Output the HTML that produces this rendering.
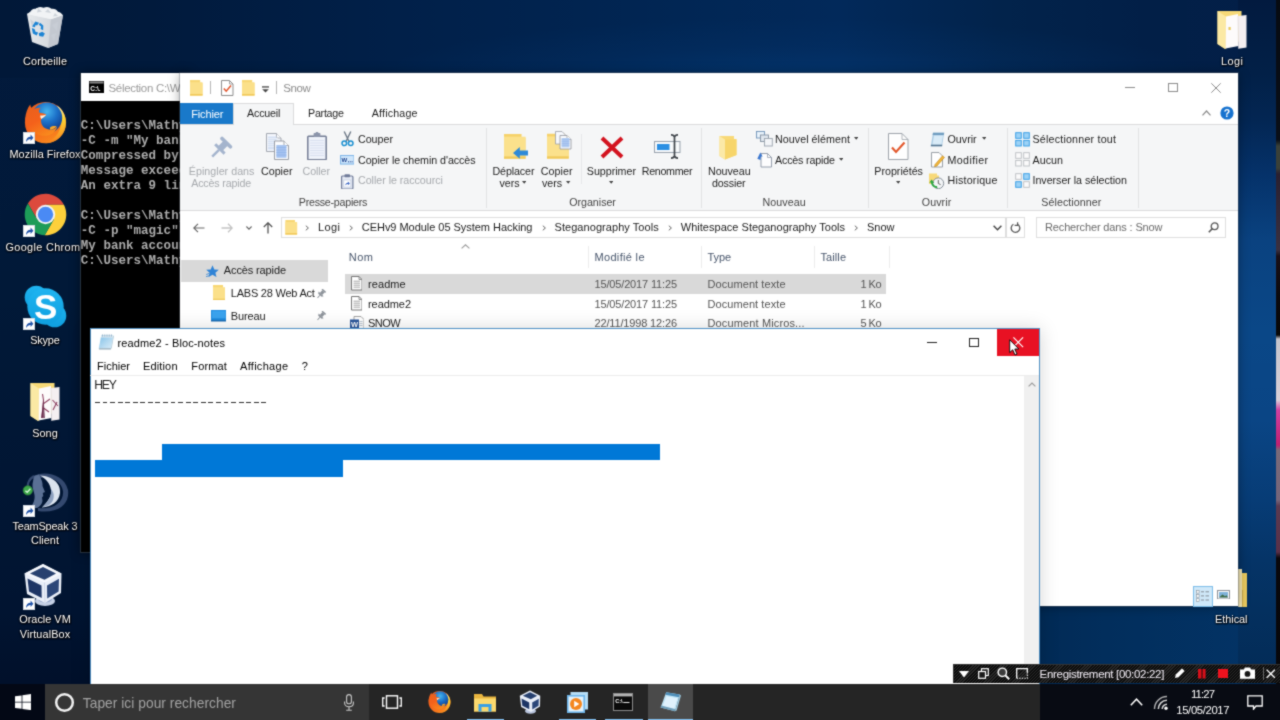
<!DOCTYPE html>
<html><head><meta charset="utf-8"><title>desktop</title><style>
html,body{margin:0;padding:0;background:#011839;}
body{width:1280px;height:720px;overflow:hidden;position:relative;font-family:"Liberation Sans",sans-serif;}
#scr{position:absolute;left:0;top:0;width:1280px;height:720px;overflow:hidden;filter:url(#soft);}
.b{position:absolute;display:block;}
.t{position:absolute;white-space:nowrap;font-family:"Liberation Sans",sans-serif;}
#wall{background:
 linear-gradient(180deg,#021a3f 0,#022047 73px,#032653 120px,#05326a 175px,#0a4280 240px,#0a4787 330px,#0a4585 420px,#073c76 500px,#053467 560px,#04305f 610px,#032c58 664px,#032c58 720px) 1238px 0/42px 720px no-repeat,
 linear-gradient(90deg,#022a55 0,#022e5c 30%,#033467 100%) 1030px 600px/250px 120px no-repeat,
 radial-gradient(ellipse 420px 62px at 790px 80px,rgba(5,62,124,.55) 0,rgba(4,52,108,.28) 55%,rgba(3,44,96,0) 100%) 0 0/1280px 78px no-repeat,
 linear-gradient(90deg,#011838 0,#011a3c 150px,#012049 400px,#012654 680px,#02295a 840px,#02234b 1000px,#021f47 1150px,#031f48 1280px) 0 0/1280px 78px no-repeat,
 linear-gradient(180deg,#021a3d 0,#011938 40%,#011431 85%,#010e27 100%);}
</style></head>
<body>
<svg width="0" height="0" style="position:absolute"><defs><filter id="soft" x="0" y="0" width="100%" height="100%" color-interpolation-filters="sRGB"><feConvolveMatrix order="3" kernelMatrix="0.035 0.095 0.035 0.095 0.48 0.095 0.035 0.095 0.035" edgeMode="duplicate" preserveAlpha="true"/></filter></defs></svg>
<div id="scr">
<!-- gen1_desktop -->
<div class="b" id="wall" style="left:0;top:0;width:1280px;height:720px;"></div>
<div class="b" style="left:1276.3px;top:0px;width:3.7px;height:720px;background:linear-gradient(180deg,#070b12 0,#0a0f18 140px,#3a4038 146px,#3a4038 168px,#2a2030 174px,#3a3040 250px,#1a1018 256px,#0c0a0e 297px,#080808 335px,#c4c4cc 339px,#d8d0d8 400px,#d040a0 410px,#c02070 445px,#7a6a78 450px,#75657a 500px,#5a3a50 506px,#5a3048 552px,#0a080c 558px,#06070a 720px);"></div>
<svg class="b" style="left:24px;top:5px;" width="42" height="46" viewBox="0 0 42 46">
  <defs>
   <linearGradient id="bin1" x1="0" y1="0" x2="1" y2="0"><stop offset="0" stop-color="#e6e9ec"/><stop offset=".6" stop-color="#d6dadf"/><stop offset="1" stop-color="#bcc2ca"/></linearGradient>
  </defs>
  <path d="M3 9 L13 3 L39 10 L34 39 L24 43 L8 37 Z" fill="url(#bin1)"/>
  <path d="M27 14 L39 10 L34 39 L24 43 Z" fill="#c3c8d0"/>
  <path d="M3 9 L13 3 L39 10 L27 14 Z" fill="#e9ecef"/>
  <path d="M6 7.5 q2 -4.5 6 -3.5 q3 -3.5 7.5 -1.2 q4.5 -2.2 8 1 q4.5 -.5 6.5 3 q3.5 .5 4.5 3.5 l-11.5 4 l-23 -5z" fill="#f1f3f5"/>
  <g fill="#c9cfd7" opacity=".85"><path d="M14 3.5 l4 3 l-5 1z"/><path d="M24 4 l3 4 l-6 -1z"/><path d="M31 8 l3 3 l-5 .5z"/><path d="M28 20 l6 -3 l-1 9z"/><path d="M27 30 l5 -2 l-2 8z"/><path d="M6 14 l4 3 l-2 5z"/></g>
  <g fill="#1c84d4" transform="translate(14.3 24.2) scale(.78) translate(-16 -25)">
    <path d="M8 21.5 L12.2 15.2 L17 16.6 L14.4 20.2 L12.6 19.6 L11.6 22.6Z"/>
    <path d="M18.2 16.8 L22.4 20.4 L22.2 26.2 L19 24.6 L19.6 21.6 L16.6 19.2Z"/>
    <path d="M7.6 23.6 L11.2 24.6 L12.4 28.4 L15.8 29.2 L14 33 L9 30.4Z"/>
    <path d="M16.6 30.2 L21 28.2 L24.4 30.4 L22.2 34.6 L17.2 33.6Z"/>
  </g>
</svg>
<span class="t" style="left:23.00px;top:51.90px;font-size:10.9px;line-height:18px;height:18px;color:#fff;letter-spacing:0.123px;text-shadow:0 1px 2px #000,0 0 2px #000,1px 1px 1px rgba(0,0,0,.8);">Corbeille</span>
<svg class="b" style="left:24px;top:99.5px;" width="43" height="44" viewBox="0 0 43 44">
  <defs>
   <radialGradient id="ffg" cx=".5" cy=".3" r=".75"><stop offset="0" stop-color="#46b6ef"/><stop offset=".45" stop-color="#1c70c8"/><stop offset="1" stop-color="#0d2f7c"/></radialGradient>
   <linearGradient id="fff" x1=".1" y1="0" x2=".7" y2="1"><stop offset="0" stop-color="#e8601d"/><stop offset=".5" stop-color="#f4611b"/><stop offset="1" stop-color="#f98b1d"/></linearGradient>
   <linearGradient id="ffy" x1="0" y1="0" x2="0" y2="1"><stop offset="0" stop-color="#fff3b0"/><stop offset=".35" stop-color="#fdd534"/><stop offset="1" stop-color="#f7821c"/></linearGradient>
  </defs>
  <!-- fox body disk -->
  <circle cx="21.5" cy="22.6" r="20.6" fill="url(#fff)"/>
  <!-- yellow tail on right -->
  <path d="M33 5.5 C41.5 11 44.5 23 39.5 32.5 C35.5 39.5 28.5 43 21.5 43.2 C31 40 37.5 31.5 36.8 21 C36.5 15 35 9.5 33 5.5Z" fill="url(#ffy)"/>
  <!-- globe -->
  <circle cx="22.8" cy="17.8" r="15.4" fill="url(#ffg)"/>
  <!-- fox head overlapping globe -->
  <path d="M1.2 19 C1.6 13 3.4 8.5 6.2 4.6 C6.6 7.2 7.6 9 9.2 10 C11 8.2 13.8 7.4 16.8 7.8 C15.2 9.2 14.6 10.8 15.1 12.6 C17.2 13.4 19.8 13.4 22.3 14.4 C21.4 16.4 18.8 17.4 17.3 18.9 C16.4 22.3 18 26.2 21.8 28.6 C25.8 30.8 30.5 29.8 33.4 26.2 C31.4 33.5 24 37 17 35.5 C8 33.5 1.5 27 1.2 19Z" fill="url(#fff)"/>
  <path d="M17.3 18.9 C18.8 17.4 21.4 16.4 22.3 14.4 C20.5 15 18.5 15.6 16.2 15.4 C16.2 16.8 16.6 18 17.3 18.9Z" fill="#fff6e6"/>
  <path d="M26 27.5 C28 26 30 25.7 32.5 26.2 C31 28.4 28.6 29.8 26 29.8Z" fill="#f9a62a"/>
</svg>
<svg class="b" style="left:22.5px;top:131.5px;" width="12" height="12" viewBox="0 0 12 12"><rect width="12" height="12" fill="#fff"/><rect x=".5" y=".5" width="11" height="11" fill="none" stroke="#d5dbe3"/><path d="M3 10 C3 6.5 5 4.8 7.6 4.8 L7.6 2.6 L10.4 5.8 L7.6 9 L7.6 6.9 C5.6 6.9 4.4 7.8 3 10Z" fill="#1f52a8"/></svg>
<span class="t" style="left:9.50px;top:145.40px;font-size:10.9px;line-height:18px;height:18px;color:#fff;letter-spacing:0.053px;text-shadow:0 1px 2px #000,0 0 2px #000,1px 1px 1px rgba(0,0,0,.8);">Mozilla Firefox</span>
<svg class="b" style="left:24px;top:193px;" width="43" height="43" viewBox="0 0 43 43"><path d="M3.90 10.42 A20.8 20.8 0 0 1 39.90 11.80 L21.50 11.80 L13.10 26.35Z" fill="#dc4a3d"/><path d="M39.90 11.80 A20.8 20.8 0 0 1 20.70 42.28 L29.90 26.35 L21.50 11.80Z" fill="#fdd03b"/><path d="M20.70 42.28 A20.8 20.8 0 0 1 3.90 10.42 L13.10 26.35 L29.90 26.35Z" fill="#1d9c58"/>
      <circle cx="21.5" cy="21.5" r="9.7" fill="#f2f2f2"/><circle cx="21.5" cy="21.5" r="7.7" fill="#4a8af4"/></svg>
<svg class="b" style="left:22.5px;top:225px;" width="12" height="12" viewBox="0 0 12 12"><rect width="12" height="12" fill="#fff"/><rect x=".5" y=".5" width="11" height="11" fill="none" stroke="#d5dbe3"/><path d="M3 10 C3 6.5 5 4.8 7.6 4.8 L7.6 2.6 L10.4 5.8 L7.6 9 L7.6 6.9 C5.6 6.9 4.4 7.8 3 10Z" fill="#1f52a8"/></svg>
<div class="b" style="left:0;top:236px;width:80.5px;height:22px;overflow:hidden"><span class="t" style="left:5.50px;top:1.90px;font-size:10.9px;line-height:18px;height:18px;color:#fff;letter-spacing:0.338px;text-shadow:0 1px 2px #000,0 0 2px #000,1px 1px 1px rgba(0,0,0,.8);">Google Chrome</span></div>
<svg class="b" style="left:24px;top:285px;" width="43" height="43" viewBox="0 0 43 43">
      <defs><linearGradient id="skg" x1="0" y1="0" x2="0" y2="1"><stop offset="0" stop-color="#1fb4f0"/><stop offset="1" stop-color="#0f9fe0"/></linearGradient></defs>
      <circle cx="12.3" cy="12.3" r="11.6" fill="url(#skg)"/><circle cx="30.7" cy="30.7" r="11.6" fill="url(#skg)"/><circle cx="21.5" cy="21.5" r="18.2" fill="url(#skg)"/>
      <text x="21.7" y="34" font-family="Liberation Sans" font-weight="bold" font-size="35" text-anchor="middle" fill="#fff">S</text>
    </svg>
<svg class="b" style="left:22.5px;top:317.5px;" width="12" height="12" viewBox="0 0 12 12"><rect width="12" height="12" fill="#fff"/><rect x=".5" y=".5" width="11" height="11" fill="none" stroke="#d5dbe3"/><path d="M3 10 C3 6.5 5 4.8 7.6 4.8 L7.6 2.6 L10.4 5.8 L7.6 9 L7.6 6.9 C5.6 6.9 4.4 7.8 3 10Z" fill="#1f52a8"/></svg>
<span class="t" style="left:30.25px;top:330.90px;font-size:10.9px;line-height:18px;height:18px;color:#fff;letter-spacing:-0.199px;text-shadow:0 1px 2px #000,0 0 2px #000,1px 1px 1px rgba(0,0,0,.8);">Skype</span>
<svg class="b" style="left:30px;top:382px;" width="30" height="40" viewBox="0 0 30 40">
          <path d="M0.5 1 L24.5 1 L24.5 30 L8 39 L0.5 34Z" fill="#f6d977"/>
          <path d="M0.5 1 L9 6.5 L8.3 39 L0.5 34Z" fill="#fbe9a4"/>
          <path d="M9 6.5 L21 4 L21.5 36 L8.5 38.5Z" fill="#fdfbfb"/>
          <path d="M21 6 L29.5 5 L29.5 37.5 L21.5 38.7Z" fill="#f4eff1"/>
          <path d="M21 6 L21.5 38.7" stroke="#d9d3d6" stroke-width=".6"/><g stroke="#7b2248" stroke-width="1.1" fill="none" opacity=".85"><path d="M12 36 L13.5 18 L12.5 12"/><path d="M13 22 L20 17 M13.5 26 L19 30 M22.5 18 L28 24 M23 28 L27 20"/></g><path d="M11 36 L13.5 17 L15 36Z" fill="#5a1c3d" opacity=".75"/></svg>
<span class="t" style="left:32.25px;top:424.40px;font-size:10.9px;line-height:18px;height:18px;color:#fff;letter-spacing:0.014px;text-shadow:0 1px 2px #000,0 0 2px #000,1px 1px 1px rgba(0,0,0,.8);">Song</span>
<svg class="b" style="left:22px;top:471px;" width="47" height="46" viewBox="0 0 47 46">
      <path d="M10 6 C20 -1 42 2 46 19 C48 33 36 43 16 40 L16 37 C32 39 42 31 41 20 C39 8 24 3 13 9Z" fill="#34496f"/>
      <path d="M18 4.5 C31 5 39 13 38 22 C37 31 29 36 20 36.5 C25 31 30 26 29 19 C28 12 24 8 18 4.5Z" fill="#dbe3ee"/>
      <path d="M20 36.5 C27 30 30 24 29 18 C33 22 33 30 27 34Z" fill="#8da0bf"/>
      <path d="M12 5 L17 3.5 C19 8 21 11 20.5 15 L23 21 L20.8 22 L21.3 25 L20 26.5 L20.5 30 C20 33 18 35.5 15 37 L8 37 C12 32 13 28 12.5 24 C12 20 10 17 10.5 13Z" fill="#5a7094"/>
      <path d="M12 5 C7.5 8 5.5 12 5.6 16" stroke="#34496f" stroke-width="2.2" fill="none"/>
      <circle cx="5.8" cy="19.4" r="4.7" fill="#3da84a"/><circle cx="5.8" cy="19.4" r="4.7" fill="none" stroke="#2b7d35" stroke-width=".7"/>
      <path d="M3.4 19.7 L5.2 21.3 L8.4 17.7" stroke="#d7f4d9" stroke-width="1.3" fill="none"/>
    </svg>
<svg class="b" style="left:22.5px;top:505px;" width="12" height="12" viewBox="0 0 12 12"><rect width="12" height="12" fill="#fff"/><rect x=".5" y=".5" width="11" height="11" fill="none" stroke="#d5dbe3"/><path d="M3 10 C3 6.5 5 4.8 7.6 4.8 L7.6 2.6 L10.4 5.8 L7.6 9 L7.6 6.9 C5.6 6.9 4.4 7.8 3 10Z" fill="#1f52a8"/></svg>
<span class="t" style="left:12.50px;top:516.90px;font-size:10.9px;line-height:18px;height:18px;color:#fff;letter-spacing:-0.165px;text-shadow:0 1px 2px #000,0 0 2px #000,1px 1px 1px rgba(0,0,0,.8);">TeamSpeak 3</span>
<span class="t" style="left:31.00px;top:530.90px;font-size:10.9px;line-height:18px;height:18px;color:#fff;letter-spacing:0.026px;text-shadow:0 1px 2px #000,0 0 2px #000,1px 1px 1px rgba(0,0,0,.8);">Client</span>
<svg class="b" style="left:23px;top:563px;" width="40" height="46" viewBox="0 0 40 46">
      <ellipse cx="22" cy="38" rx="10" ry="5" fill="#c4cfe4"/>
      <ellipse cx="22" cy="36" rx="7" ry="3.4" fill="#8fa2c8"/>
      <path d="M1.5 10.5 L20 1 L38.5 10.5 L38 30 L22 40 L4 31Z" fill="#e9eef8"/>
      <path d="M1.5 10.5 L20 1 L38.5 10.5 L21.5 19.5Z" fill="#f6f8fd"/>
      <path d="M7 10.5 L20 4 L33 10.5 L21.5 16.8Z" fill="#27406f"/>
      <path d="M4.5 15.5 L18.5 22.5 L18.7 35 L6 28.5Z" fill="#1d3565"/>
      <path d="M24 22.5 L36 15.8 L35.6 28.5 L24.2 35.5Z" fill="#2b4678"/>
      <path d="M21.5 19.5 L22 40" stroke="#cfd7e8" stroke-width="1"/>
    </svg>
<svg class="b" style="left:22.5px;top:597.5px;" width="12" height="12" viewBox="0 0 12 12"><rect width="12" height="12" fill="#fff"/><rect x=".5" y=".5" width="11" height="11" fill="none" stroke="#d5dbe3"/><path d="M3 10 C3 6.5 5 4.8 7.6 4.8 L7.6 2.6 L10.4 5.8 L7.6 9 L7.6 6.9 C5.6 6.9 4.4 7.8 3 10Z" fill="#1f52a8"/></svg>
<span class="t" style="left:19.25px;top:610.40px;font-size:10.9px;line-height:18px;height:18px;color:#fff;letter-spacing:0.002px;text-shadow:0 1px 2px #000,0 0 2px #000,1px 1px 1px rgba(0,0,0,.8);">Oracle VM</span>
<span class="t" style="left:19.75px;top:624.60px;font-size:10.9px;line-height:18px;height:18px;color:#fff;letter-spacing:0.113px;text-shadow:0 1px 2px #000,0 0 2px #000,1px 1px 1px rgba(0,0,0,.8);">VirtualBox</span>
<svg class="b" style="left:1217px;top:9.5px;" width="30" height="40" viewBox="0 0 30 40">
          <path d="M0.5 1 L24.5 1 L24.5 30 L8 39 L0.5 34Z" fill="#f6d977"/>
          <path d="M0.5 1 L9 6.5 L8.3 39 L0.5 34Z" fill="#fbe9a4"/>
          <path d="M9 6.5 L21 4 L21.5 36 L8.5 38.5Z" fill="#fdfbfb"/>
          <path d="M21 6 L29.5 5 L29.5 37.5 L21.5 38.7Z" fill="#f4eff1"/>
          <path d="M21 6 L21.5 38.7" stroke="#d9d3d6" stroke-width=".6"/><rect x="11.5" y="17" width="2.2" height="3" fill="#e8c95a"/></svg>
<span class="t" style="left:1221.00px;top:51.90px;font-size:10.9px;line-height:18px;height:18px;color:#fff;letter-spacing:0.464px;text-shadow:0 1px 2px #000,0 0 2px #000,1px 1px 1px rgba(0,0,0,.8);">Logi</span>
<div class="b" style="left:1238px;top:569px;width:4.2px;height:38px;background:#f3e6b4;"></div>
<div class="b" style="left:1242px;top:573px;width:5px;height:34px;background:#e9c95e;"></div>
<div class="b" style="left:1241.6px;top:590px;width:1px;height:17px;background:#c9a94a;"></div>
<span class="t" style="left:1215.05px;top:610.20px;font-size:10.9px;line-height:18px;height:18px;color:#fff;letter-spacing:-0.036px;text-shadow:0 1px 2px #000,0 0 2px #000,1px 1px 1px rgba(0,0,0,.8);">Ethical</span>
<!-- gen2_cmd -->
<div class="b" style="left:80.3px;top:72.8px;width:110px;height:480.6px;background:#000;box-shadow:0 0 10px rgba(0,0,0,.45);border:1px solid #27323f;box-sizing:border-box;"></div>
<div class="b" style="left:80.5px;top:72.8px;width:110px;height:28.5px;background:#fff;"></div>
<svg class="b" style="left:88.5px;top:80.5px;" width="15" height="12" viewBox="0 0 15 12"><rect width="15" height="12" fill="#000"/><rect x=".5" y=".5" width="14" height="2" fill="#8a8a8a"/><text x="1.2" y="9.6" font-family="Liberation Sans" font-weight="bold" font-size="6.5" fill="#fff">C:\.</text></svg>
<div class="b" style="left:100px;top:76px;width:80px;height:24px;overflow:hidden"><span class="t" style="left:8.50px;top:2.62px;font-size:11.5px;line-height:18px;height:18px;color:#9a9a9a;letter-spacing:-0.312px;">Sélection C:\W</span></div>
<div class="b" style="left:80.5px;top:101px;width:100px;height:200px;overflow:hidden">
<span class="t" style="left:0.30px;top:14.97px;font-size:12.55px;line-height:20px;height:20px;color:#adadad;font-family:'Liberation Mono',monospace;font-weight:bold;transform:scaleY(1.08);transform-origin:0 13px;white-space:pre;">C:\Users\Mathy</span>
<span class="t" style="left:0.30px;top:29.97px;font-size:12.55px;line-height:20px;height:20px;color:#adadad;font-family:'Liberation Mono',monospace;font-weight:bold;transform:scaleY(1.08);transform-origin:0 13px;white-space:pre;">-C -m "My bank</span>
<span class="t" style="left:0.30px;top:44.97px;font-size:12.55px;line-height:20px;height:20px;color:#adadad;font-family:'Liberation Mono',monospace;font-weight:bold;transform:scaleY(1.08);transform-origin:0 13px;white-space:pre;">Compressed by </span>
<span class="t" style="left:0.30px;top:59.97px;font-size:12.55px;line-height:20px;height:20px;color:#adadad;font-family:'Liberation Mono',monospace;font-weight:bold;transform:scaleY(1.08);transform-origin:0 13px;white-space:pre;">Message exceed</span>
<span class="t" style="left:0.30px;top:74.97px;font-size:12.55px;line-height:20px;height:20px;color:#adadad;font-family:'Liberation Mono',monospace;font-weight:bold;transform:scaleY(1.08);transform-origin:0 13px;white-space:pre;">An extra 9 lin</span>
<span class="t" style="left:0.30px;top:104.97px;font-size:12.55px;line-height:20px;height:20px;color:#adadad;font-family:'Liberation Mono',monospace;font-weight:bold;transform:scaleY(1.08);transform-origin:0 13px;white-space:pre;">C:\Users\Mathy</span>
<span class="t" style="left:0.30px;top:119.97px;font-size:12.55px;line-height:20px;height:20px;color:#adadad;font-family:'Liberation Mono',monospace;font-weight:bold;transform:scaleY(1.08);transform-origin:0 13px;white-space:pre;">-C -p "magic" </span>
<span class="t" style="left:0.30px;top:134.97px;font-size:12.55px;line-height:20px;height:20px;color:#adadad;font-family:'Liberation Mono',monospace;font-weight:bold;transform:scaleY(1.08);transform-origin:0 13px;white-space:pre;">My bank accoun</span>
<span class="t" style="left:0.30px;top:149.97px;font-size:12.55px;line-height:20px;height:20px;color:#adadad;font-family:'Liberation Mono',monospace;font-weight:bold;transform:scaleY(1.08);transform-origin:0 13px;white-space:pre;">C:\Users\Mathy</span>
</div>
<!-- gen3_explorer -->
<div class="b" style="left:180px;top:73.4px;width:1058px;height:533.1px;background:#fff;box-shadow:0 1px 11px rgba(0,0,0,.36);outline:1px solid rgba(80,90,100,.35);"></div>
<svg class="b" style="left:190px;top:80px;" width="12.5" height="15.5" viewBox="0 0 12.5 15.5"><path d="M0 0 H10.2 V3 H12.5 V15.5 H0Z" fill="#f8d775"/><path d="M0 2.2 H12.5 V15.5 H0Z" fill="#fbe08a"/><path d="M0 14 H12.5 V15.5 H0Z" fill="#f1c95a"/></svg>
<div class="b" style="left:209.7px;top:81px;width:1px;height:13px;background:#b5b5b5;"></div>
<svg class="b" style="left:221px;top:80px;" width="12.5" height="16" viewBox="0 0 12.5 16"><path d="M.5 .5 H8.5 L12 4 V15.5 H.5Z" fill="#fff" stroke="#8d8d8d" stroke-width="1"/><path d="M8.5 .5 V4 H12" fill="none" stroke="#8d8d8d" stroke-width=".8"/><path d="M2.8 8.6 L5.2 11.2 L10 5.6" fill="none" stroke="#e0532b" stroke-width="1.5"/></svg>
<svg class="b" style="left:242px;top:80px;" width="12.5" height="15.5" viewBox="0 0 12.5 15.5"><path d="M0 0 H10.2 V3 H12.5 V15.5 H0Z" fill="#f8d775"/><path d="M0 2.2 H12.5 V15.5 H0Z" fill="#fbe08a"/><path d="M0 14 H12.5 V15.5 H0Z" fill="#f1c95a"/></svg>
<svg class="b" style="left:261.5px;top:85.5px;" width="7" height="7" viewBox="0 0 7 7"><rect x="0" y=".3" width="7" height="1.3" fill="#444"/><path d="M.2 3.2 H6.8 L3.5 6.6Z" fill="#444"/></svg>
<div class="b" style="left:276px;top:81px;width:1px;height:13px;background:#b5b5b5;"></div>
<span class="t" style="left:283.20px;top:79.12px;font-size:11.5px;line-height:18px;height:18px;color:#8b8b8b;letter-spacing:-0.423px;">Snow</span>
<div class="b" style="left:1125px;top:87.2px;width:10px;height:1px;background:#8c8c8c;"></div>
<div class="b" style="left:1168px;top:82.5px;width:9.5px;height:9.5px;border:1px solid #8c8c8c;box-sizing:border-box;"></div>
<svg class="b" style="left:1211px;top:82.5px;" width="10" height="10" viewBox="0 0 10 10"><path d="M.3 .3 L9.7 9.7 M9.7 .3 L.3 9.7" stroke="#8c8c8c" stroke-width="1"/></svg>
<div class="b" style="left:180px;top:102.5px;width:53.3px;height:21.5px;background:#1979ca;"></div>
<span class="t" style="left:191.30px;top:104.54px;font-size:11px;line-height:18px;height:18px;color:#fff;letter-spacing:-0.168px;">Fichier</span>
<div class="b" style="left:180px;top:123.8px;width:1058px;height:87.5px;background:#f5f6f7;border-top:1px solid #dadbdc;border-bottom:1px solid #dadbdc;box-sizing:border-box;"></div>
<div class="b" style="left:233.3px;top:102.5px;width:60.5px;height:22.3px;background:#f5f6f7;border:1px solid #dadbdc;border-bottom:none;box-sizing:border-box;"></div>
<span class="t" style="left:247.00px;top:104.43px;font-size:10.7px;line-height:18px;height:18px;color:#1e1e1e;letter-spacing:-0.166px;">Accueil</span>
<span class="t" style="left:308.00px;top:104.43px;font-size:10.7px;line-height:18px;height:18px;color:#1e1e1e;letter-spacing:-0.246px;">Partage</span>
<span class="t" style="left:371.80px;top:104.43px;font-size:10.7px;line-height:18px;height:18px;color:#1e1e1e;letter-spacing:0.160px;">Affichage</span>
<svg class="b" style="left:1201.5px;top:110px;" width="9" height="6" viewBox="0 0 9 6"><path d="M.5 5.3 L4.5 1 L8.5 5.3" fill="none" stroke="#8a8a8a" stroke-width="1.2"/></svg>
<svg class="b" style="left:1220px;top:106px;" width="14" height="14" viewBox="0 0 14 14"><circle cx="7" cy="7" r="6.6" fill="#1672cf"/><text x="7" y="11" font-family="Liberation Sans" font-weight="bold" font-size="10.5" text-anchor="middle" fill="#fff">?</text></svg>
<svg class="b" style="left:211px;top:136px;" width="22" height="22" viewBox="0 0 22 22"><g stroke="#a4b4cd" stroke-linecap="butt" fill="none"><path d="M1.2 20.6 L8 13.8" stroke-width="2.5"/><path d="M4.2 8.2 L13.6 17.6" stroke-width="3"/><path d="M8.6 13.2 L14.4 7.4" stroke-width="6.4"/><path d="M11 2.4 L19.4 10.8" stroke-width="3.6" stroke-linecap="round"/></g></svg>
<span class="t" style="left:188.80px;top:161.83px;font-size:10.7px;line-height:18px;height:18px;color:#a6a9ad;letter-spacing:0.022px;">Épingler dans</span>
<span class="t" style="left:191.20px;top:173.83px;font-size:10.7px;line-height:18px;height:18px;color:#a6a9ad;letter-spacing:-0.169px;">Accès rapide</span>
<svg class="b" style="left:266px;top:133px;" width="23" height="27" viewBox="0 0 23 27"><path d="M.5 .5 H10.5 L15 5 V18.5 H.5Z" fill="#f3f6fc" stroke="#9b9fa8" stroke-width=".9"/><path d="M10.5 .5 V5 H15" fill="#fff" stroke="#9b9fa8" stroke-width=".8"/>
      <rect x="2" y="3.5" width="8.5" height="13" fill="#d5e0f3"/><g stroke="#f3f6fc" stroke-width=".6"><path d="M2 5.5H12M2 7.5H12M2 9.5H12M2 11.5H12M2 13.5H12"/></g>
      <path d="M8.5 8 H18 L22.5 12.5 V26.5 H8.5Z" fill="#fbfcfe" stroke="#90949d" stroke-width=".9"/><path d="M18 8 V12.5 H22.5" fill="#fff" stroke="#90949d" stroke-width=".8"/>
      <rect x="10.3" y="12" width="10.2" height="12.8" fill="#a7c4f0"/><g stroke="#8db0e8" stroke-width=".7"><path d="M10.3 14.5H20.5M10.3 17H20.5M10.3 19.5H20.5M10.3 22H20.5"/></g></svg>
<span class="t" style="left:261.00px;top:161.83px;font-size:10.7px;line-height:18px;height:18px;color:#1e1e1e;letter-spacing:-0.004px;">Copier</span>
<svg class="b" style="left:307px;top:131.5px;" width="20" height="28.5" viewBox="0 0 20 28.5"><rect x=".8" y="4.2" width="18.4" height="23.5" rx=".8" fill="#eef2fa" stroke="#737c94" stroke-width="1.5"/>
      <rect x="6.6" y="1" width="6.8" height="4" rx=".8" fill="#8c95ab"/><rect x="8.6" y="0" width="2.8" height="2" rx=".8" fill="#8c95ab"/>
      <g stroke="#d3dbee" stroke-width=".8"><path d="M3 8.5H17M3 11H17M3 13.5H17M3 16H17M3 18.5H17M3 21H17M3 23.5H17"/></g></svg>
<span class="t" style="left:302.50px;top:161.83px;font-size:10.7px;line-height:18px;height:18px;color:#a6a9ad;letter-spacing:-0.090px;">Coller</span>
<svg class="b" style="left:341px;top:131px;" width="13" height="16" viewBox="0 0 13 16"><path d="M3.2 .5 L8 10.5 M9.8 .5 L5 10.5" stroke="#6c7886" stroke-width="1.4" fill="none"/>
      <circle cx="3.3" cy="12.3" r="2.3" fill="none" stroke="#1a8fd0" stroke-width="1.5"/><circle cx="9.7" cy="12.3" r="2.3" fill="none" stroke="#1a8fd0" stroke-width="1.5"/></svg>
<span class="t" style="left:358.00px;top:130.13px;font-size:10.7px;line-height:18px;height:18px;color:#1e1e1e;letter-spacing:-0.019px;">Couper</span>
<svg class="b" style="left:339.5px;top:155px;" width="14.5" height="9.5" viewBox="0 0 14.5 9.5"><rect width="14.5" height="9.5" fill="#cfe6fb"/><rect x=".5" y=".5" width="13.5" height="8.5" fill="none" stroke="#7fb6e8"/><text x="1.5" y="7.3" font-family="Liberation Sans" font-weight="bold" font-size="6" fill="#1b3f8a">W</text><path d="M8 6.8H13" stroke="#1b3f8a" stroke-width="1" stroke-dasharray="1 .8"/></svg>
<span class="t" style="left:358.00px;top:150.83px;font-size:10.7px;line-height:18px;height:18px;color:#1e1e1e;letter-spacing:-0.066px;">Copier le chemin d'accès</span>
<svg class="b" style="left:341px;top:173.5px;" width="12.5" height="15.5" viewBox="0 0 12.5 15.5"><rect x=".6" y="2" width="11.3" height="13" rx="1" fill="#e6ebf5" stroke="#6f7a98" stroke-width="1.2"/><rect x="3.5" y=".3" width="5.5" height="3" rx=".8" fill="#6f7a98"/><rect x="2.8" y="6" width="7" height="7" fill="#fff" stroke="#b8c3da" stroke-width=".6"/><path d="M4.3 11.6 C4.3 9.6 5.4 8.7 6.9 8.7 V7.4 L8.9 9.4 L6.9 11.3 V10.1 C5.8 10.1 5.1 10.6 4.3 11.6Z" fill="#3b66c4"/></svg>
<span class="t" style="left:358.00px;top:171.33px;font-size:10.7px;line-height:18px;height:18px;color:#a6a9ad;letter-spacing:-0.035px;">Coller le raccourci</span>
<span class="t" style="left:298.80px;top:192.83px;font-size:10.7px;line-height:18px;height:18px;color:#444;letter-spacing:-0.251px;">Presse-papiers</span>
<div class="b" style="left:485.5px;top:127.5px;width:1px;height:80.0px;background:#e1e2e4;"></div>
<svg class="b" style="left:504px;top:133px;" width="21.5" height="26.7" viewBox="0 0 24.5 28"><path d="M0 0 H20 V4 H24.5 V28 H0Z" fill="#f6d26b"/><path d="M0 3 H24.5 V28 H0Z" fill="#fbe18c"/><path d="M0 25.5 H24.5 V28 H0Z" fill="#f0c95c"/></svg>
<svg class="b" style="left:513px;top:147.2px;" width="15" height="11.8" viewBox="0 0 15 11.8"><path d="M0 5.9 L6.8 0 V3.4 H15 V8.4 H6.8 V11.8Z" fill="#2e8ad8"/></svg>
<span class="t" style="left:492.50px;top:161.83px;font-size:10.7px;line-height:18px;height:18px;color:#1e1e1e;letter-spacing:-0.118px;">Déplacer</span>
<span class="t" style="left:499.50px;top:173.83px;font-size:10.7px;line-height:18px;height:18px;color:#1e1e1e;letter-spacing:-0.072px;">vers</span>
<svg class="b" style="left:522.0999999999999px;top:180.9px;" width="4.4" height="2.7" viewBox="0 0 4.4 2.7"><path d="M0 0 H4.4 L2.2 2.7Z" fill="#444"/></svg>
<svg class="b" style="left:547px;top:133.4px;" width="21.7" height="26.3" viewBox="0 0 24.5 28"><path d="M0 0 H20 V4 H24.5 V28 H0Z" fill="#f6d26b"/><path d="M0 3 H24.5 V28 H0Z" fill="#fbe18c"/><path d="M0 25.5 H24.5 V28 H0Z" fill="#f0c95c"/></svg>
<svg class="b" style="left:555px;top:131px;" width="17" height="18.5" viewBox="0 0 17 18.5"><path d="M.5 .5 H7 L10 3.5 V13 H.5Z" fill="#f6f8fc" stroke="#9a9ea6" stroke-width=".8"/><path d="M5 4.5 H12 L16 8.5 V18 H5Z" fill="#fbfcfe" stroke="#8f939b" stroke-width=".8"/><path d="M12 4.5 V8.5 H16" fill="#fff" stroke="#8f939b" stroke-width=".7"/><rect x="6.6" y="7" width="7.8" height="9.4" fill="#b4cdf2"/><g stroke="#8fb1e8" stroke-width=".6"><path d="M6.6 8.8H14.4M6.6 10.6H14.4M6.6 12.4H14.4M6.6 14.2H14.4"/></g></svg>
<span class="t" style="left:540.80px;top:161.83px;font-size:10.7px;line-height:18px;height:18px;color:#1e1e1e;letter-spacing:0.036px;">Copier</span>
<span class="t" style="left:542.00px;top:173.83px;font-size:10.7px;line-height:18px;height:18px;color:#1e1e1e;letter-spacing:-0.072px;">vers</span>
<svg class="b" style="left:566.3px;top:180.9px;" width="4.4" height="2.7" viewBox="0 0 4.4 2.7"><path d="M0 0 H4.4 L2.2 2.7Z" fill="#444"/></svg>
<div class="b" style="left:581px;top:134px;width:1px;height:50px;background:#e6e7e9;"></div>
<svg class="b" style="left:600px;top:135.5px;" width="24" height="23" viewBox="0 0 24 23"><path d="M2 2 L22 21 M22 2 L2 21" stroke="#d3131f" stroke-width="4" stroke-linecap="butt"/></svg>
<span class="t" style="left:586.80px;top:161.83px;font-size:10.7px;line-height:18px;height:18px;color:#1e1e1e;letter-spacing:-0.020px;">Supprimer</span>
<svg class="b" style="left:608.8px;top:180.9px;" width="4.4" height="2.7" viewBox="0 0 4.4 2.7"><path d="M0 0 H4.4 L2.2 2.7Z" fill="#444"/></svg>
<svg class="b" style="left:654px;top:134px;" width="27" height="25" viewBox="0 0 27 25"><rect x=".5" y="7.5" width="25.5" height="11" fill="#f8fafc" stroke="#98a1ad"/><rect x="3" y="10" width="12.5" height="6" fill="#2b8fe3"/>
      <path d="M17 .8 C19 .8 20 1.6 20.5 2.8 C21 1.6 22 .8 24 .8 M17 24.2 C19 24.2 20 23.4 20.5 22.2 C21 23.4 22 24.2 24 24.2 M20.5 2.8 V22.2" stroke="#40454b" stroke-width="1.7" fill="none"/></svg>
<span class="t" style="left:641.80px;top:161.83px;font-size:10.7px;line-height:18px;height:18px;color:#1e1e1e;letter-spacing:-0.317px;">Renommer</span>
<span class="t" style="left:569.20px;top:192.83px;font-size:10.7px;line-height:18px;height:18px;color:#444;letter-spacing:-0.023px;">Organiser</span>
<div class="b" style="left:701px;top:127.5px;width:1px;height:80.0px;background:#e1e2e4;"></div>
<svg class="b" style="left:718.5px;top:135.5px;" width="18" height="24" viewBox="0 0 18 24"><path d="M.5 0 H15 V3 H17.5 V19 L6 23.5 L.5 20Z" fill="#f8d978"/><path d="M.5 0 L6 3.5 V23.5 L.5 20Z" fill="#fbe9a7"/><path d="M6 3.5 H17.5 V19 L6 23.5Z" fill="#f7d56a"/></svg>
<span class="t" style="left:708.00px;top:161.83px;font-size:10.7px;line-height:18px;height:18px;color:#1e1e1e;letter-spacing:-0.022px;">Nouveau</span>
<span class="t" style="left:712.00px;top:173.83px;font-size:10.7px;line-height:18px;height:18px;color:#1e1e1e;letter-spacing:-0.132px;">dossier</span>
<svg class="b" style="left:756px;top:131px;" width="17" height="15.5" viewBox="0 0 17 15.5"><rect x=".5" y=".5" width="8" height="6.5" fill="#e8f2fb" stroke="#6f93b8" stroke-width=".9"/><rect x="4.5" y="4" width="8" height="6.5" fill="#dfe6ee" stroke="#8491a0" stroke-width=".9"/><rect x="8.5" y="7.5" width="7.8" height="7.5" fill="#f3f5f8" stroke="#9aa3ad" stroke-width=".9"/></svg>
<span class="t" style="left:775.00px;top:130.13px;font-size:10.7px;line-height:18px;height:18px;color:#1e1e1e;letter-spacing:0.050px;">Nouvel élément</span>
<svg class="b" style="left:854.0999999999999px;top:137.4px;" width="4.4" height="2.7" viewBox="0 0 4.4 2.7"><path d="M0 0 H4.4 L2.2 2.7Z" fill="#444"/></svg>
<svg class="b" style="left:756.5px;top:152px;" width="15" height="15.5" viewBox="0 0 15 15.5"><path d="M4 1.5 H10.5 L14.5 5.5 V15 H4Z" fill="#fdfdfe" stroke="#8a94a4" stroke-width=".9"/><path d="M10.5 1.5 V5.5 H14.5" fill="none" stroke="#8a94a4" stroke-width=".7"/><path d="M.3 6.8 L3.3 .5 L5.6 4.4 L3.9 4.6 L3.4 8Z" fill="#3a76cf"/></svg>
<span class="t" style="left:775.00px;top:150.53px;font-size:10.7px;line-height:18px;height:18px;color:#1e1e1e;letter-spacing:-0.169px;">Accès rapide</span>
<svg class="b" style="left:839.0999999999999px;top:157.9px;" width="4.4" height="2.7" viewBox="0 0 4.4 2.7"><path d="M0 0 H4.4 L2.2 2.7Z" fill="#444"/></svg>
<span class="t" style="left:762.50px;top:192.83px;font-size:10.7px;line-height:18px;height:18px;color:#444;letter-spacing:0.078px;">Nouveau</span>
<div class="b" style="left:868px;top:127.5px;width:1px;height:80.0px;background:#e1e2e4;"></div>
<svg class="b" style="left:888px;top:133px;" width="20.5" height="27" viewBox="0 0 20.5 27"><path d="M.5 .5 H14 L20 6.5 V26.5 H.5Z" fill="#fefefe" stroke="#9ea4ab"/><path d="M14 .5 V6.5 H20" fill="none" stroke="#9ea4ab" stroke-width=".8"/><path d="M4 14.5 L8 19 L16.5 9.5" fill="none" stroke="#e2572b" stroke-width="2.1"/></svg>
<span class="t" style="left:874.30px;top:161.83px;font-size:10.7px;line-height:18px;height:18px;color:#1e1e1e;letter-spacing:-0.008px;">Propriétés</span>
<svg class="b" style="left:895.8px;top:180.9px;" width="4.4" height="2.7" viewBox="0 0 4.4 2.7"><path d="M0 0 H4.4 L2.2 2.7Z" fill="#444"/></svg>
<svg class="b" style="left:929.5px;top:131.5px;" width="15" height="15" viewBox="0 0 15 15"><path d="M3 .8 H14.2 L12 14.2 H.8Z" fill="#a9cbe4"/><path d="M3 .8 H14.2 L13.8 3 H2.6Z" fill="#6f9cbf"/><path d="M4 3.6 H13 L11.4 12.8 H2.4Z" fill="#d9ebf7"/><path d="M.8 14.2 H12 L12.3 12.8 H1Z" fill="#54748f"/></svg>
<span class="t" style="left:947.50px;top:130.13px;font-size:10.7px;line-height:18px;height:18px;color:#1e1e1e;letter-spacing:0.014px;">Ouvrir</span>
<svg class="b" style="left:981.5999999999999px;top:137.4px;" width="4.4" height="2.7" viewBox="0 0 4.4 2.7"><path d="M0 0 H4.4 L2.2 2.7Z" fill="#444"/></svg>
<svg class="b" style="left:931px;top:152px;" width="14" height="15.5" viewBox="0 0 14 15.5"><path d="M.5 .5 H8 L11.5 4 V15 H.5Z" fill="#fefefe" stroke="#8f959c" stroke-width=".9"/><path d="M4 12.5 L11.5 3.8 L13.5 5.4 L6 14 L3.5 14.8Z" fill="#f0b53a" stroke="#b47b12" stroke-width=".5"/></svg>
<span class="t" style="left:947.50px;top:150.53px;font-size:10.7px;line-height:18px;height:18px;color:#1e1e1e;letter-spacing:0.377px;">Modifier</span>
<svg class="b" style="left:928.5px;top:172.5px;" width="16" height="16.5" viewBox="0 0 16 16.5"><path d="M0 .5 H8 V2.5 H10 V11 H0Z" fill="#f8d978"/><circle cx="9.3" cy="10.3" r="5.4" fill="#f2f4f6" stroke="#7b848e" stroke-width=".9"/><path d="M9.3 7 V10.5 L11.6 11.6" stroke="#555" stroke-width=".9" fill="none"/><path d="M1.8 9.5 C2.5 13.2 5.5 15.2 8.5 15.2 L8 13 C6 13 4.3 11.9 3.8 9.9 L5.2 9.7 L2.6 6.4 L.3 9.8Z" fill="#2da743"/></svg>
<span class="t" style="left:947.50px;top:171.33px;font-size:10.7px;line-height:18px;height:18px;color:#1e1e1e;letter-spacing:0.203px;">Historique</span>
<span class="t" style="left:921.80px;top:192.83px;font-size:10.7px;line-height:18px;height:18px;color:#444;letter-spacing:0.074px;">Ouvrir</span>
<div class="b" style="left:1007.3px;top:127.5px;width:1px;height:80.0px;background:#e1e2e4;"></div>
<svg class="b" style="left:1014.5px;top:131.5px;" width="15.5" height="15" viewBox="0 0 15.5 15"><rect x="0.7" y="0.7" width="5.6" height="5.6" fill="#9cd2f6" stroke="#2f9be5" stroke-width=".9"/><rect x="0.7" y="8.4" width="5.6" height="5.6" fill="#9cd2f6" stroke="#2f9be5" stroke-width=".9"/><rect x="8.7" y="0.7" width="5.6" height="5.6" fill="#9cd2f6" stroke="#2f9be5" stroke-width=".9"/><rect x="8.7" y="8.4" width="5.6" height="5.6" fill="#9cd2f6" stroke="#2f9be5" stroke-width=".9"/></svg>
<span class="t" style="left:1032.50px;top:130.13px;font-size:10.7px;line-height:18px;height:18px;color:#1e1e1e;letter-spacing:0.200px;">Sélectionner tout</span>
<svg class="b" style="left:1014.5px;top:152px;" width="15.5" height="15" viewBox="0 0 15.5 15"><rect x="0.7" y="0.7" width="5.6" height="5.6" fill="#fbfbfb" stroke="#b9bcc0" stroke-width=".9"/><rect x="0.7" y="8.4" width="5.6" height="5.6" fill="#fbfbfb" stroke="#b9bcc0" stroke-width=".9"/><rect x="8.7" y="0.7" width="5.6" height="5.6" fill="#fbfbfb" stroke="#b9bcc0" stroke-width=".9"/><rect x="8.7" y="8.4" width="5.6" height="5.6" fill="#fbfbfb" stroke="#b9bcc0" stroke-width=".9"/></svg>
<span class="t" style="left:1032.50px;top:150.53px;font-size:10.7px;line-height:18px;height:18px;color:#1e1e1e;letter-spacing:0.040px;">Aucun</span>
<svg class="b" style="left:1014.5px;top:172.5px;" width="15.5" height="15.5" viewBox="0 0 15.5 15.5"><rect x="0.7" y="0.7" width="5.6" height="5.6" fill="#fbfbfb" stroke="#b9bcc0" stroke-width=".9"/><rect x="8.7" y="0.7" width="5.6" height="5.6" fill="#9cd2f6" stroke="#2f9be5" stroke-width=".9"/><rect x="0.7" y="8.7" width="5.6" height="5.6" fill="#9cd2f6" stroke="#2f9be5" stroke-width=".9"/><rect x="8.7" y="8.7" width="5.6" height="5.6" fill="#fbfbfb" stroke="#b9bcc0" stroke-width=".9"/></svg>
<span class="t" style="left:1032.50px;top:171.33px;font-size:10.7px;line-height:18px;height:18px;color:#1e1e1e;letter-spacing:-0.033px;">Inverser la sélection</span>
<span class="t" style="left:1041.30px;top:192.83px;font-size:10.7px;line-height:18px;height:18px;color:#444;letter-spacing:0.047px;">Sélectionner</span>
<div class="b" style="left:1137.5px;top:127.5px;width:1px;height:80.0px;background:#e1e2e4;"></div>
<!-- gen4_explorer2 -->
<svg class="b" style="left:192.5px;top:222.5px;" width="12" height="10" viewBox="0 0 12 10"><path d="M11.5 5 H1 M5 .8 L.8 5 L5 9.2" fill="none" stroke="#666" stroke-width="1.15"/></svg>
<svg class="b" style="left:221px;top:222.5px;" width="12" height="10" viewBox="0 0 12 10"><path d="M.5 5 H11 M7 .8 L11.2 5 L7 9.2" fill="none" stroke="#c3c3c3" stroke-width="1.3"/></svg>
<svg class="b" style="left:246px;top:225.5px;" width="6" height="4" viewBox="0 0 6 4"><path d="M.4 .5 L3 3.2 L5.6 .5" fill="none" stroke="#666" stroke-width="1.1"/></svg>
<svg class="b" style="left:263px;top:221.5px;" width="10" height="12" viewBox="0 0 10 12"><path d="M5 11.5 V1 M.8 5 L5 .8 L9.2 5" fill="none" stroke="#555" stroke-width="1.3"/></svg>
<div class="b" style="left:280.7px;top:217.3px;width:725px;height:20.5px;background:#fff;border:1px solid #dedede;box-sizing:border-box;"></div>
<svg class="b" style="left:285px;top:220px;" width="12.5" height="14.5" viewBox="0 0 12.5 15.5"><path d="M0 0 H10.2 V3 H12.5 V15.5 H0Z" fill="#f8d775"/><path d="M0 2.2 H12.5 V15.5 H0Z" fill="#fbe08a"/><path d="M0 14 H12.5 V15.5 H0Z" fill="#f1c95a"/></svg>
<svg class="b" style="left:305.4px;top:225px;" width="4.5" height="6" viewBox="0 0 4.5 6"><path d="M.8 .7 L3.4 3 L.8 5.3" fill="none" stroke="#666" stroke-width="1"/></svg>
<span class="t" style="left:318.00px;top:218.24px;font-size:11px;line-height:18px;height:18px;color:#1c1c1c;letter-spacing:0.401px;">Logi</span>
<svg class="b" style="left:349.2px;top:225px;" width="4.5" height="6" viewBox="0 0 4.5 6"><path d="M.8 .7 L3.4 3 L.8 5.3" fill="none" stroke="#666" stroke-width="1"/></svg>
<span class="t" style="left:361.80px;top:218.24px;font-size:11px;line-height:18px;height:18px;color:#1c1c1c;letter-spacing:-0.038px;">CEHv9 Module 05 System Hacking</span>
<svg class="b" style="left:542.1999999999999px;top:225px;" width="4.5" height="6" viewBox="0 0 4.5 6"><path d="M.8 .7 L3.4 3 L.8 5.3" fill="none" stroke="#666" stroke-width="1"/></svg>
<span class="t" style="left:554.50px;top:218.24px;font-size:11px;line-height:18px;height:18px;color:#1c1c1c;letter-spacing:0.058px;">Steganography Tools</span>
<svg class="b" style="left:667.9px;top:225px;" width="4.5" height="6" viewBox="0 0 4.5 6"><path d="M.8 .7 L3.4 3 L.8 5.3" fill="none" stroke="#666" stroke-width="1"/></svg>
<span class="t" style="left:680.80px;top:218.24px;font-size:11px;line-height:18px;height:18px;color:#1c1c1c;letter-spacing:0.018px;">Whitespace Steganography Tools</span>
<svg class="b" style="left:854.4px;top:225px;" width="4.5" height="6" viewBox="0 0 4.5 6"><path d="M.8 .7 L3.4 3 L.8 5.3" fill="none" stroke="#666" stroke-width="1"/></svg>
<span class="t" style="left:867.00px;top:218.24px;font-size:11px;line-height:18px;height:18px;color:#1c1c1c;letter-spacing:-0.006px;">Snow</span>
<svg class="b" style="left:992.5px;top:224.5px;" width="9" height="6" viewBox="0 0 9 6"><path d="M.6 .7 L4.5 4.8 L8.4 .7" fill="none" stroke="#444" stroke-width="1.4"/></svg>
<div class="b" style="left:1005.5px;top:217.3px;width:19.2px;height:20.5px;background:#fff;border:1px solid #dedede;box-sizing:border-box;"></div>
<svg class="b" style="left:1009.5px;top:221.7px;" width="11" height="11.6" viewBox="0 0 11 11.6"><path d="M7.4 2.2 A4.3 4.3 0 1 1 3.4 2.3" fill="none" stroke="#555" stroke-width="1.25"/><path d="M7.6 .2 V3.4 H4.6" fill="none" stroke="#555" stroke-width="1.2"/></svg>
<div class="b" style="left:1036px;top:217.3px;width:190.2px;height:20.5px;background:#fff;border:1px solid #dedede;box-sizing:border-box;"></div>
<span class="t" style="left:1045.00px;top:218.24px;font-size:11px;line-height:18px;height:18px;color:#6a6a6a;letter-spacing:-0.141px;">Rechercher dans : Snow</span>
<svg class="b" style="left:1207.5px;top:222px;" width="11" height="11" viewBox="0 0 11 11"><circle cx="6.6" cy="4.3" r="3.4" fill="none" stroke="#555" stroke-width="1.3"/><path d="M4.2 6.8 L.8 10.3" stroke="#555" stroke-width="1.6"/></svg>
<div class="b" style="left:181px;top:259.7px;width:147px;height:22px;background:#d9d9d9;"></div>
<svg class="b" style="left:205.5px;top:264.5px;" width="13" height="12.5" viewBox="0 0 13 12.5"><path d="M6.5 .3 L8.3 4.4 L12.8 4.8 L9.4 7.7 L10.5 12.1 L6.5 9.7 L2.5 12.1 L3.6 7.7 L.2 4.8 L4.7 4.4Z" fill="#2f83d6"/><path d="M.2 9.5 L3.4 8.4 M0 11.6 L3 10.8" stroke="#2f83d6" stroke-width=".8"/></svg>
<span class="t" style="left:223.80px;top:261.14px;font-size:11px;line-height:18px;height:18px;color:#1c1c1c;letter-spacing:-0.126px;">Accès rapide</span>
<svg class="b" style="left:213px;top:285px;" width="12.3" height="15.3" viewBox="0 0 12.5 15.5"><path d="M0 0 H10.2 V3 H12.5 V15.5 H0Z" fill="#f8d775"/><path d="M0 2.2 H12.5 V15.5 H0Z" fill="#fbe08a"/><path d="M0 14 H12.5 V15.5 H0Z" fill="#f1c95a"/></svg>
<div class="b" style="left:228px;top:283px;width:86.5px;height:20px;overflow:hidden"><span class="t" style="left:2.80px;top:0.94px;font-size:11px;line-height:18px;height:18px;color:#1c1c1c;letter-spacing:-0.226px;">LABS 28 Web Acti</span></div>
<svg class="b" style="left:316px;top:288.5px;" width="9.5" height="10" viewBox="0 0 9.5 10"><g transform="rotate(42 5 5)" fill="#8d939a"><rect x="2.6" y="0" width="4.8" height="1.6"/><rect x="3.4" y="1.4" width="3.2" height="3.6"/><path d="M1.6 4.8 H8.4 L7.3 6.6 H2.7Z"/><rect x="4.55" y="6.6" width=".9" height="3.6"/></g></svg>
<svg class="b" style="left:210.5px;top:310px;" width="15.5" height="11.5" viewBox="0 0 15.5 11.5"><rect width="15.5" height="10" fill="#1e8be0"/><rect x="1" y="1" width="13.5" height="7.2" fill="#3aa3ee"/><rect x="0" y="10" width="15.5" height="1.5" fill="#176bb4"/></svg>
<span class="t" style="left:230.80px;top:306.74px;font-size:11px;line-height:18px;height:18px;color:#1c1c1c;letter-spacing:-0.154px;">Bureau</span>
<svg class="b" style="left:316px;top:311px;" width="9.5" height="10" viewBox="0 0 9.5 10"><g transform="rotate(42 5 5)" fill="#8d939a"><rect x="2.6" y="0" width="4.8" height="1.6"/><rect x="3.4" y="1.4" width="3.2" height="3.6"/><path d="M1.6 4.8 H8.4 L7.3 6.6 H2.7Z"/><rect x="4.55" y="6.6" width=".9" height="3.6"/></g></svg>
<svg class="b" style="left:460.5px;top:243.5px;" width="9" height="5" viewBox="0 0 9 5"><path d="M.6 4.4 L4.5 .8 L8.4 4.4" fill="none" stroke="#9b9b9b" stroke-width="1.1"/></svg>
<span class="t" style="left:348.80px;top:247.74px;font-size:11px;line-height:18px;height:18px;color:#47556b;letter-spacing:0.487px;">Nom</span>
<span class="t" style="left:594.50px;top:247.74px;font-size:11px;line-height:18px;height:18px;color:#47556b;letter-spacing:0.325px;">Modifié le</span>
<span class="t" style="left:707.50px;top:247.74px;font-size:11px;line-height:18px;height:18px;color:#47556b;letter-spacing:-0.116px;">Type</span>
<span class="t" style="left:820.50px;top:247.74px;font-size:11px;line-height:18px;height:18px;color:#47556b;letter-spacing:0.086px;">Taille</span>
<div class="b" style="left:587.5px;top:246px;width:1px;height:22px;background:#ececec;"></div>
<div class="b" style="left:700.5px;top:246px;width:1px;height:22px;background:#ececec;"></div>
<div class="b" style="left:813.5px;top:246px;width:1px;height:22px;background:#ececec;"></div>
<div class="b" style="left:888.5px;top:246px;width:1px;height:22px;background:#ececec;"></div>
<div class="b" style="left:345px;top:273.7px;width:540.5px;height:20px;background:#d9d9d9;"></div>
<svg class="b" style="left:350.7px;top:276.2px;" width="11.5" height="14.5" viewBox="0 0 11.5 14.5"><path d="M.5 .5 H8 L11 3.5 V14 H.5Z" fill="#fff" stroke="#767676" stroke-width="1"/><path d="M8 .5 V3.5 H11" fill="none" stroke="#767676" stroke-width=".8"/><g stroke="#9a9a9a" stroke-width=".85"><path d="M2.5 5.2H9M2.5 7.2H9M2.5 9.2H9M2.5 11.2H9"/></g></svg>
<span class="t" style="left:368.00px;top:274.64px;font-size:11px;line-height:18px;height:18px;color:#1c1c1c;letter-spacing:0.080px;">readme</span>
<span class="t" style="left:594.50px;top:274.64px;font-size:11px;line-height:18px;height:18px;color:#555;letter-spacing:-0.155px;">15/05/2017 11:25</span>
<span class="t" style="left:707.50px;top:274.64px;font-size:11px;line-height:18px;height:18px;color:#555;letter-spacing:0.074px;">Document texte</span>
<span class="t" style="left:860.50px;top:274.64px;font-size:11px;line-height:18px;height:18px;color:#555;letter-spacing:-0.543px;">1 Ko</span>
<svg class="b" style="left:350.7px;top:296.2px;" width="11.5" height="14.5" viewBox="0 0 11.5 14.5"><path d="M.5 .5 H8 L11 3.5 V14 H.5Z" fill="#fff" stroke="#767676" stroke-width="1"/><path d="M8 .5 V3.5 H11" fill="none" stroke="#767676" stroke-width=".8"/><g stroke="#9a9a9a" stroke-width=".85"><path d="M2.5 5.2H9M2.5 7.2H9M2.5 9.2H9M2.5 11.2H9"/></g></svg>
<span class="t" style="left:368.00px;top:294.64px;font-size:11px;line-height:18px;height:18px;color:#1c1c1c;letter-spacing:-0.069px;">readme2</span>
<span class="t" style="left:594.50px;top:294.64px;font-size:11px;line-height:18px;height:18px;color:#555;letter-spacing:-0.155px;">15/05/2017 11:25</span>
<span class="t" style="left:707.50px;top:294.64px;font-size:11px;line-height:18px;height:18px;color:#555;letter-spacing:0.074px;">Document texte</span>
<span class="t" style="left:860.50px;top:294.64px;font-size:11px;line-height:18px;height:18px;color:#555;letter-spacing:-0.543px;">1 Ko</span>
<span class="t" style="left:368.00px;top:314.24px;font-size:11px;line-height:18px;height:18px;color:#1c1c1c;letter-spacing:-0.506px;">SNOW</span>
<span class="t" style="left:594.50px;top:314.24px;font-size:11px;line-height:18px;height:18px;color:#555;letter-spacing:-0.155px;">22/11/1998 12:26</span>
<span class="t" style="left:707.50px;top:314.24px;font-size:11px;line-height:18px;height:18px;color:#555;letter-spacing:0.132px;">Document Micros...</span>
<span class="t" style="left:860.50px;top:314.24px;font-size:11px;line-height:18px;height:18px;color:#555;letter-spacing:-0.543px;">5 Ko</span>
<svg class="b" style="left:349.5px;top:316px;" width="14.5" height="14" viewBox="0 0 14.5 14"><path d="M4 .5 H11 L14 3.5 V13.5 H4Z" fill="#fff" stroke="#8c8c8c" stroke-width=".8"/><g stroke="#9ab" stroke-width=".7"><path d="M9.5 5.5H12.5M9.5 7.5H12.5M9.5 9.5H12.5"/></g><rect x="0" y="3.5" width="9" height="9" fill="#2a569b"/><text x="4.5" y="10.8" font-family="Liberation Sans" font-weight="bold" font-size="7.5" text-anchor="middle" fill="#fff">W</text></svg>
<div class="b" style="left:1193px;top:585.5px;width:20px;height:21px;background:#cfe8f9;border:1px solid #7dbde9;box-sizing:border-box;"></div>
<svg class="b" style="left:1196px;top:590px;" width="14" height="12" viewBox="0 0 14 12"><rect x=".5" y="0.5" width="2.6" height="2.6" fill="#fff" stroke="#8a8f96" stroke-width=".6"/><path d="M5 1.8 H8 M9.5 1.8 H13" stroke="#7a8088" stroke-width=".9"/><rect x=".5" y="4.6" width="2.6" height="2.6" fill="#fff" stroke="#8a8f96" stroke-width=".6"/><path d="M5 5.8999999999999995 H8 M9.5 5.8999999999999995 H13" stroke="#7a8088" stroke-width=".9"/><rect x=".5" y="8.7" width="2.6" height="2.6" fill="#fff" stroke="#8a8f96" stroke-width=".6"/><path d="M5 10.0 H8 M9.5 10.0 H13" stroke="#7a8088" stroke-width=".9"/></svg>
<svg class="b" style="left:1217px;top:589.5px;" width="13" height="9.5" viewBox="0 0 13 9.5"><rect x=".5" y=".5" width="12" height="8.5" fill="#fff" stroke="#8a8f96"/><rect x="2" y="2" width="9" height="5.5" fill="#7fb2d9"/><path d="M2 7.5 L5.5 4.5 L8 6.3 L9.5 5.3 L11 7.5Z" fill="#3d6a42"/></svg>
<!-- gen5_notepad -->
<div class="b" style="left:89.7px;top:328.2px;width:950.0999999999999px;height:400px;background:#fff;box-shadow:0 1px 18px rgba(0,0,0,.17);border:1px solid #4d8fc4;box-sizing:border-box;"></div>
<svg class="b" style="left:97.5px;top:334px;" width="16" height="16" viewBox="0 0 16 16"><defs><linearGradient id="npg" x1="0" y1="0" x2="1" y2="1"><stop offset="0" stop-color="#7fbfe6"/><stop offset=".6" stop-color="#b9dcf2"/><stop offset="1" stop-color="#d9edf8"/></linearGradient></defs><path d="M3.2 1.4 H15.4 L13 14.2 H.8Z" fill="url(#npg)"/><path d="M3.2 1.4 H15.4 L15 3.4 H2.8Z" fill="#dfeaf2"/><path d="M.8 14.2 H13 L12.8 15.4 H1Z" fill="#8fa9b8"/><path d="M13 14.2 L15.4 1.4 L15.9 2.2 L13.6 14.8Z" fill="#a8c3d2"/><g stroke="#6f97b3" stroke-width=".7"><path d="M4.6 .4V2.6M6.8 .4V2.6M9 .4V2.6M11.2 .4V2.6M13.4 .4V2.6"/></g></svg>
<span class="t" style="left:117.50px;top:333.94px;font-size:11px;line-height:18px;height:18px;color:#000;letter-spacing:0.123px;">readme2 - Bloc-notes</span>
<div class="b" style="left:926.5px;top:342px;width:10.5px;height:1.2px;background:#222;"></div>
<div class="b" style="left:969.2px;top:337.5px;width:9.6px;height:9.6px;border:1.3px solid #222;box-sizing:border-box;"></div>
<div class="b" style="left:996.8px;top:328.8px;width:42.6px;height:27px;background:#e81123;"></div>
<svg class="b" style="left:1013px;top:337px;" width="10.5" height="10.5" viewBox="0 0 10.5 10.5"><path d="M.4 .4 L10.1 10.1 M10.1 .4 L.4 10.1" stroke="#fff" stroke-width="1.2"/></svg>
<span class="t" style="left:97.00px;top:357.14px;font-size:11px;line-height:18px;height:18px;color:#000;letter-spacing:-0.001px;">Fichier</span>
<span class="t" style="left:143.00px;top:357.14px;font-size:11px;line-height:18px;height:18px;color:#000;letter-spacing:0.144px;">Edition</span>
<span class="t" style="left:191.30px;top:357.14px;font-size:11px;line-height:18px;height:18px;color:#000;letter-spacing:0.132px;">Format</span>
<span class="t" style="left:240.00px;top:357.14px;font-size:11px;line-height:18px;height:18px;color:#000;letter-spacing:0.292px;">Affichage</span>
<span class="t" style="left:301.80px;top:357.14px;font-size:11px;line-height:18px;height:18px;color:#000;">?</span>
<div class="b" style="left:90.3px;top:375px;width:949px;height:1px;background:#ececec;"></div>
<div class="b" style="left:1024px;top:376px;width:15px;height:352px;background:#f0f0f0;"></div>
<svg class="b" style="left:1027.5px;top:382px;" width="8" height="5" viewBox="0 0 8 5"><path d="M.6 4.4 L4 1 L7.4 4.4" fill="none" stroke="#9a9a9a" stroke-width="1.2"/></svg>
<span class="t" style="left:94.30px;top:374.87px;font-size:12.2px;line-height:20px;height:20px;color:#1a1a1a;letter-spacing:-1.293px;">HEY</span>
<div class="b" style="left:95.2px;top:401.65px;width:171.2px;height:1px;background:repeating-linear-gradient(90deg,#2e2e2e 0,#2e2e2e 4.9px,transparent 4.9px,transparent 7.56px);"></div>
<span class="t" style="left:95.00px;top:392.82px;font-size:12.5px;line-height:20px;height:20px;color:transparent;letter-spacing:-0.060px;font-family:'Liberation Mono',monospace;">-----------------------</span>
<div class="b" style="left:162.1px;top:443.7px;width:497.6px;height:16.6px;background:#0078d7;"></div>
<div class="b" style="left:94.5px;top:460.1px;width:248.2px;height:16.6px;background:#0078d7;"></div>
<!-- gen6_taskbar -->
<div class="b" style="left:0px;top:683.5px;width:1280px;height:40px;background:#080b13;"></div>
<div class="b" style="left:89.7px;top:683.5px;width:950.1px;height:40px;background:#252525;"></div>
<div class="b" style="left:45px;top:683.5px;width:323.5px;height:40px;background:#353535;"></div>
<div class="b" style="left:0px;top:683.5px;width:45px;height:40px;background:#030815;"></div>
<svg class="b" style="left:14.7px;top:693.8px;" width="16" height="16.2" viewBox="0 0 16 16.2"><path d="M0 2.3 L6.6 1.4 V7.7 H0Z M7.4 1.3 L16 0 V7.7 H7.4Z M0 8.5 H6.6 V14.8 L0 13.9Z M7.4 8.5 H16 V16.2 L7.4 14.9Z" fill="#fff"/></svg>
<svg class="b" style="left:53.5px;top:691.5px;" width="21" height="21" viewBox="0 0 21 21"><circle cx="10.5" cy="10.5" r="8.3" fill="none" stroke="#f2f2f2" stroke-width="2.5"/></svg>
<span class="t" style="left:82.80px;top:692.73px;font-size:13.8px;line-height:21px;height:21px;color:#a2a2a2;letter-spacing:0.023px;transform:scaleY(1.1);transform-origin:0 15px;">Taper ici pour rechercher</span>
<svg class="b" style="left:344px;top:693.5px;" width="10" height="17" viewBox="0 0 10 17"><rect x="2.6" y=".6" width="4.8" height="9.2" rx="2.4" fill="none" stroke="#c9c9c9" stroke-width="1.1"/><path d="M.6 7.5 V9 C.6 14 9.4 14 9.4 9 V7.5 M5 12.8 V16 M2.2 16.2 H7.8" fill="none" stroke="#c9c9c9" stroke-width="1.1"/></svg>
<svg class="b" style="left:382px;top:695px;" width="20" height="14" viewBox="0 0 20 14"><rect x="4.5" y=".8" width="11" height="12.4" fill="none" stroke="#fff" stroke-width="1.4"/><path d="M2.6 3 H.7 V11 H2.6 M17.4 3 H19.3 V11 H17.4" fill="none" stroke="#fff" stroke-width="1.3"/></svg>
<svg class="b" style="left:428px;top:690.3px;" width="23" height="23.5" viewBox="0 0 43 44">
  <defs>
   <radialGradient id="ffg" cx=".5" cy=".3" r=".75"><stop offset="0" stop-color="#46b6ef"/><stop offset=".45" stop-color="#1c70c8"/><stop offset="1" stop-color="#0d2f7c"/></radialGradient>
   <linearGradient id="fff" x1=".1" y1="0" x2=".7" y2="1"><stop offset="0" stop-color="#e8601d"/><stop offset=".5" stop-color="#f4611b"/><stop offset="1" stop-color="#f98b1d"/></linearGradient>
   <linearGradient id="ffy" x1="0" y1="0" x2="0" y2="1"><stop offset="0" stop-color="#fff3b0"/><stop offset=".35" stop-color="#fdd534"/><stop offset="1" stop-color="#f7821c"/></linearGradient>
  </defs>
  <!-- fox body disk -->
  <circle cx="21.5" cy="22.6" r="20.6" fill="url(#fff)"/>
  <!-- yellow tail on right -->
  <path d="M33 5.5 C41.5 11 44.5 23 39.5 32.5 C35.5 39.5 28.5 43 21.5 43.2 C31 40 37.5 31.5 36.8 21 C36.5 15 35 9.5 33 5.5Z" fill="url(#ffy)"/>
  <!-- globe -->
  <circle cx="22.8" cy="17.8" r="15.4" fill="url(#ffg)"/>
  <!-- fox head overlapping globe -->
  <path d="M1.2 19 C1.6 13 3.4 8.5 6.2 4.6 C6.6 7.2 7.6 9 9.2 10 C11 8.2 13.8 7.4 16.8 7.8 C15.2 9.2 14.6 10.8 15.1 12.6 C17.2 13.4 19.8 13.4 22.3 14.4 C21.4 16.4 18.8 17.4 17.3 18.9 C16.4 22.3 18 26.2 21.8 28.6 C25.8 30.8 30.5 29.8 33.4 26.2 C31.4 33.5 24 37 17 35.5 C8 33.5 1.5 27 1.2 19Z" fill="url(#fff)"/>
  <path d="M17.3 18.9 C18.8 17.4 21.4 16.4 22.3 14.4 C20.5 15 18.5 15.6 16.2 15.4 C16.2 16.8 16.6 18 17.3 18.9Z" fill="#fff6e6"/>
  <path d="M26 27.5 C28 26 30 25.7 32.5 26.2 C31 28.4 28.6 29.8 26 29.8Z" fill="#f9a62a"/>
</svg>
<svg class="b" style="left:473px;top:691.5px;" width="24" height="21" viewBox="0 0 24 21"><path d="M1 2 H9 L10.5 4.5 H23 V19.5 H1Z" fill="#e9b53f"/><path d="M1 6.5 H23 V19.5 H1Z" fill="#fbd96e"/><path d="M5.5 12 H18.5 V19.5 H5.5Z" fill="#39a0e6"/><path d="M8.5 15 H15.5 V19.5 H8.5Z" fill="#fbd96e"/></svg>
<svg class="b" style="left:518.5px;top:690px;" width="22" height="25" viewBox="0 0 22 25"><ellipse cx="11.5" cy="21" rx="5.5" ry="2.8" fill="#b8c4dd"/><path d="M.8 5.8 L11 .6 L21.2 5.8 L21 16.5 L12 22 L2.2 17Z" fill="#e9eef8"/><path d="M3.8 5.8 L11 2.3 L18.2 5.8 L11.8 9.2Z" fill="#27406f"/><path d="M2.5 8.5 L10.2 12.4 L10.3 19.3 L3.3 15.7Z" fill="#1d3565"/><path d="M13.2 12.4 L19.8 8.7 L19.6 15.7 L13.3 19.5Z" fill="#2b4678"/></svg>
<svg class="b" style="left:566.5px;top:692px;" width="21" height="21" viewBox="0 0 21 21"><rect x="3.5" y="0" width="17.5" height="17.5" fill="#b5dcf5"/><rect x="0" y="3" width="18" height="18" fill="#6db5ea"/><rect x="1.6" y="4.6" width="14.8" height="14.8" fill="#e3f2fc"/><circle cx="9" cy="12" r="6" fill="#f5871f"/><path d="M7.2 8.8 L12.3 12 L7.2 15.2Z" fill="#fff"/></svg>
<svg class="b" style="left:613px;top:692.5px;" width="20" height="18" viewBox="0 0 20 18"><rect width="20" height="18" fill="#0a0a0a"/><rect x=".5" y=".5" width="19" height="17" fill="none" stroke="#8c8c8c"/><rect x="1" y="1" width="18" height="2.4" fill="#b5b5b5"/><text x="2.2" y="10.2" font-family="Liberation Sans" font-weight="bold" font-size="5.6" fill="#fff">C:\.</text><path d="M11 9.5 H16.5" stroke="#fff" stroke-width=".9"/></svg>
<div class="b" style="left:647.8px;top:683.5px;width:44.8px;height:40px;background:#4a4a4a;"></div>
<svg class="b" style="left:657.5px;top:690px;" width="24" height="24" viewBox="0 0 24 24"><path d="M8.2 2.2 L21.8 4.6 L17 21.2 L2.6 17.4Z" fill="#bfe4f6"/><path d="M8.2 2.2 L21.8 4.6 L21 7.2 L7.4 4.8Z" fill="#4d8db8"/><path d="M8.6 6.2 L19.6 8.2 L16 19 L4.6 16.2Z" fill="#e9f6fd" opacity=".75"/><path d="M2.6 17.4 L17 21.2 L17.6 19.2 L3.2 15.6Z" fill="#6f9fbb"/><path d="M21.8 4.6 L17 21.2 L18.6 20.4 L23 5.6Z" fill="#9cc6dc"/></svg>
<div class="b" style="left:466.5px;top:718.5px;width:37.5px;height:1.5px;background:#85c1f0;"></div>
<div class="b" style="left:558.8px;top:718.5px;width:37.5px;height:1.5px;background:#85c1f0;"></div>
<div class="b" style="left:605px;top:718.5px;width:37.5px;height:1.5px;background:#85c1f0;"></div>
<div class="b" style="left:647.8px;top:718.5px;width:44.80000000000007px;height:1.5px;background:#85c1f0;"></div>
<svg class="b" style="left:1129.5px;top:698px;" width="13" height="8" viewBox="0 0 13 8"><path d="M.8 7.2 L6.5 1.2 L12.2 7.2" fill="none" stroke="#fff" stroke-width="1.5"/></svg>
<svg class="b" style="left:1152.5px;top:694.5px;" width="15" height="15" viewBox="0 0 15 15"><g fill="none" stroke="#d8d8d8" stroke-width="1.5"><path d="M1.5 14 A12.5 12.5 0 0 1 14 1.5" opacity=".8"/><path d="M5.3 14 A8.7 8.7 0 0 1 14 5.3"/><path d="M9.2 14 A4.8 4.8 0 0 1 14 9.2"/></g><circle cx="13" cy="13.2" r="1.7" fill="#fff"/></svg>
<span class="t" style="left:1191.00px;top:684.85px;font-size:11.3px;line-height:18px;height:18px;color:#fff;letter-spacing:-0.860px;">11:27</span>
<span class="t" style="left:1176.30px;top:701.35px;font-size:11.3px;line-height:18px;height:18px;color:#fff;letter-spacing:-0.373px;">15/05/2017</span>
<svg class="b" style="left:1246.5px;top:694.5px;" width="16" height="15.5" viewBox="0 0 16 15.5"><path d="M.8 .8 H15.2 V11 H9 L6.5 14.2 V11 H.8Z" fill="none" stroke="#fff" stroke-width="1.3"/></svg>
<div class="b" style="left:952.7px;top:663.7px;width:327.3px;height:19.6px;background:repeating-linear-gradient(135deg,#2a2a2a 0,#2a2a2a 1px,#0c0c0c 1px,#0c0c0c 2.2px);border-top:1px solid #333;border-left:1px solid #333;box-sizing:border-box;"></div>
<svg class="b" style="left:958.5px;top:670.5px;" width="10" height="6.5" viewBox="0 0 10 6.5"><path d="M0 0 H10 L5 6.5Z" fill="#fff"/></svg>
<svg class="b" style="left:977.5px;top:667.5px;" width="11" height="11" viewBox="0 0 11 11"><rect x="3.5" y=".7" width="6.8" height="6.8" fill="none" stroke="#fff" stroke-width="1.2"/><rect x=".7" y="3.5" width="6.8" height="6.8" fill="#1a1a1a" stroke="#fff" stroke-width="1.2"/></svg>
<svg class="b" style="left:996.5px;top:666.5px;" width="13" height="13" viewBox="0 0 13 13"><circle cx="5.3" cy="5.3" r="4.2" fill="#3a3a3a" stroke="#fff" stroke-width="1.4"/><path d="M8.4 8.4 L12.2 12.2" stroke="#fff" stroke-width="2"/></svg>
<svg class="b" style="left:1016px;top:667.5px;" width="12" height="11" viewBox="0 0 12 11"><path d="M.7 10.3 V.7 H11.3 V4" fill="none" stroke="#fff" stroke-width="1.3"/><path d="M11.3 4 V10.3 H.7" fill="none" stroke="#fff" stroke-width="1.1" stroke-dasharray="1.4 1.2"/></svg>
<span class="t" style="left:1039.60px;top:664.82px;font-size:11.5px;line-height:18px;height:18px;color:#f3eef6;letter-spacing:-0.314px;">Enregistrement [00:02:22]</span>
<svg class="b" style="left:1174px;top:667px;" width="12" height="12" viewBox="0 0 12 12"><path d="M1 11 L1.8 7.6 L8 1.4 L10.6 4 L4.4 10.2Z" fill="#fff"/></svg>
<svg class="b" style="left:1197.5px;top:669px;" width="8" height="9.5" viewBox="0 0 8 9.5"><rect x="0" y="0" width="3" height="9.5" fill="#d8101a"/><rect x="4.6" y="0" width="3" height="9.5" fill="#d8101a"/><rect x="3" y="0" width="1.6" height="9.5" fill="#7a0a10"/></svg>
<div class="b" style="left:1218px;top:668.7px;width:9.5px;height:9.3px;background:#f0121e;"></div>
<svg class="b" style="left:1239.5px;top:667px;" width="15" height="12" viewBox="0 0 15 12"><path d="M0 2.5 H3.8 L5 .6 H10 L11.2 2.5 H15 V11.7 H0Z" fill="#fff"/><circle cx="7.5" cy="6.9" r="2.9" fill="#161616"/></svg>
<div class="b" style="left:1262.5px;top:667px;width:1px;height:13px;background:#6a6a6a;"></div>
<svg class="b" style="left:1265.5px;top:668.5px;" width="9.5" height="9.5" viewBox="0 0 9.5 9.5"><path d="M.6 .6 L8.9 8.9 M8.9 .6 L.6 8.9" stroke="#fff" stroke-width="1.3"/></svg>
<svg class="b" style="left:1008.5px;top:339px;" width="11" height="17" viewBox="0 0 11 17"><path d="M.7 .8 V13.6 L3.7 10.8 L6 16 L8 15.1 L5.8 10 H9.8Z" fill="#fff" stroke="#000" stroke-width=".9" stroke-linejoin="miter"/></svg>
</div>
</body></html>
